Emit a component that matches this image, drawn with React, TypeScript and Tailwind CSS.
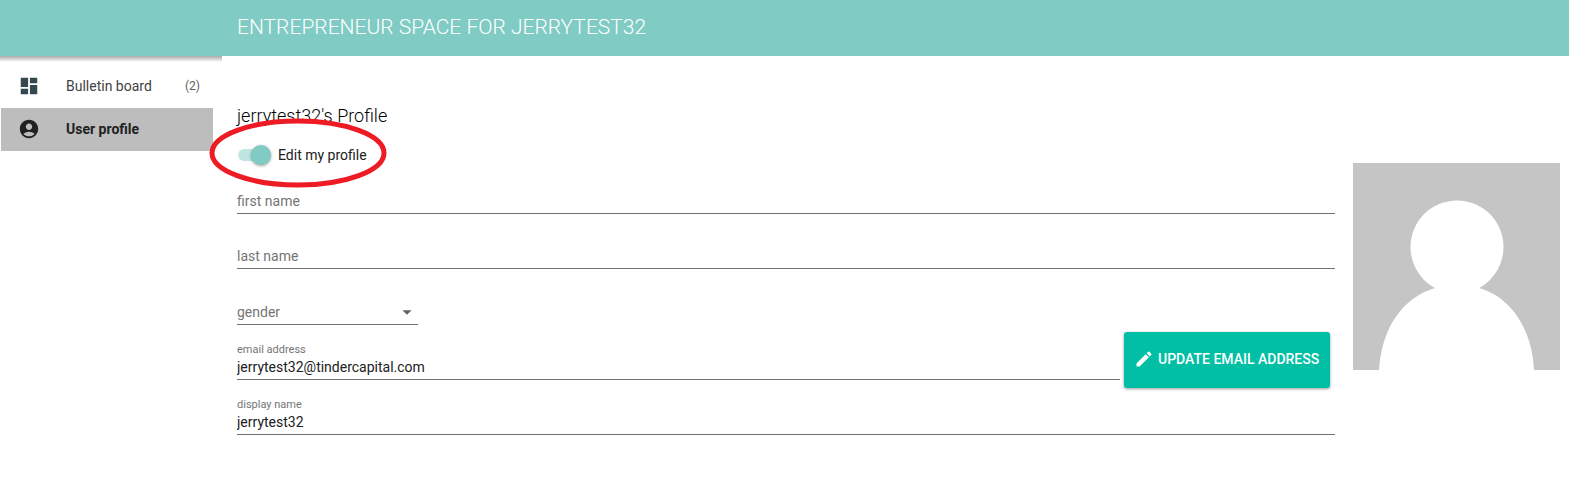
import React, { useState } from "react";
import { MdAccountCircle, MdArrowDropDown, MdDashboard, MdEdit } from "react-icons/md";

const fieldClass =
  "block h-6 w-full border-b border-[#727272] bg-transparent pb-0.5 text-sm leading-5 text-[#212121] outline-none placeholder:text-[#757575] placeholder:opacity-100";

function LabeledField({ id, label, value }: { id: string; label: string; value: string }) {
  return (
    <div className="min-w-0 flex-1">
      <label htmlFor={id} className="block h-4 pt-0.5 text-[11px] leading-4 text-[#757575]">
        {label}
      </label>
      <input id={id} defaultValue={value} className={fieldClass} />
    </div>
  );
}

function Sidebar() {
  return (
    <nav className="pt-[9px] pr-[9px] pl-px">
      <a href="#board" className="flex h-[43px] items-center px-[17px] pb-0.5 text-sm text-[#424242]">
        <MdDashboard className="size-[22px] text-[#37474f]" />
        <span className="ml-[26px] flex-1">Bulletin board</span>
        <span className="-mr-1 text-xs text-[#616161]">(2)</span>
      </a>
      <a
        href="#profile"
        aria-current="page"
        className="flex h-[43px] items-center bg-[#bdbdbd] px-[17px] pb-0.5 text-sm font-bold text-[#212121]"
      >
        <MdAccountCircle className="size-[22px]" />
        <span className="ml-[26px]">User profile</span>
      </a>
    </nav>
  );
}

function EditToggle() {
  const [on, setOn] = useState(true);
  return (
    <div className="relative mt-[15px] flex h-6 w-fit items-center">
      <label className="flex cursor-pointer items-center pl-px text-sm text-[#212121]">
        <input
          type="checkbox"
          role="switch"
          checked={on}
          onChange={(e) => setOn(e.target.checked)}
          className="peer sr-only"
        />
        <span className="mr-[7px] flex h-3 w-[33px] items-center justify-start rounded-full bg-[#c0e6e2] peer-checked:justify-end">
          <span className="size-5 shrink-0 rounded-full bg-[#80cbc4] shadow-[0_1px_3px_rgba(0,0,0,0.4)]" />
        </span>
        Edit my profile
      </label>
      <svg
        aria-hidden="true"
        viewBox="0 0 178 70"
        className="pointer-events-none absolute -top-[25px] -left-7 h-[70px] w-[178px]"
      >
        <ellipse cx="89" cy="35" rx="86" ry="32" fill="none" stroke="#ed1c24" strokeWidth="5" />
      </svg>
    </div>
  );
}

export default function App() {
  return (
    <div className="min-h-screen bg-white font-['Roboto',sans-serif]">
      <header className="flex h-14 items-center bg-[#80cbc4] pl-[237px]">
        <h1 className="text-[21px] font-light text-white">ENTREPRENEUR SPACE FOR JERRYTEST32</h1>
      </header>
      <div className="flex items-start">
        <div className="w-[222px] shrink-0 bg-linear-to-b from-[#a9a9a9] to-white to-[6px]">
          <Sidebar />
        </div>
        <main className="flex min-w-0 flex-1 pt-12 pr-[9px] pl-[15px]">
          <form className="min-w-0 flex-1" onSubmit={(e) => e.preventDefault()}>
            <h2 className="text-lg leading-6 font-light text-black">jerrytest32's Profile</h2>
            <EditToggle />
            <input aria-label="first name" placeholder="first name" className={`${fieldClass} mt-[23px]`} />
            <input aria-label="last name" placeholder="last name" className={`${fieldClass} mt-[31px]`} />
            <div className="relative mt-8 w-[181px]">
              <select
                aria-label="gender"
                defaultValue=""
                className="block h-6 w-full appearance-none border-b border-[#727272] bg-transparent pb-0.5 text-sm leading-5 text-[#757575] outline-none"
              >
                <option value="">gender</option>
                <option value="female">female</option>
                <option value="male">male</option>
              </select>
              <MdArrowDropDown className="pointer-events-none absolute top-0 right-0 size-[22px] text-[#616161]" />
            </div>
            <div className="mt-[15px] flex items-center gap-1 pr-[5px]">
              <LabeledField id="email" label="email address" value="jerrytest32@tindercapital.com" />
              <button
                type="button"
                className="-my-2 flex h-14 w-[206px] items-center gap-1 rounded-[3px] bg-[#00bfa5] pb-0.5 pl-[10px] text-sm font-medium whitespace-nowrap text-white shadow-[0_1px_3px_rgba(0,0,0,0.4)]"
              >
                <MdEdit className="size-5 shrink-0" />
                UPDATE EMAIL ADDRESS
              </button>
            </div>
            <div className="mt-[15px] flex">
              <LabeledField id="display-name" label="display name" value="jerrytest32" />
            </div>
          </form>
          <svg
            role="img"
            aria-label="Profile picture"
            viewBox="0 0 207 207"
            className="mt-[59px] ml-[18px] size-[207px] shrink-0 bg-[#c5c5c5]"
          >
            <circle cx="104" cy="84" r="46.5" fill="#fff" />
            <path
              d="M26 207C29 163 51 134 82 125C96 129 112 129 126 125C158 134 179 166 181 207Z"
              fill="#fff"
            />
          </svg>
        </main>
      </div>
    </div>
  );
}
